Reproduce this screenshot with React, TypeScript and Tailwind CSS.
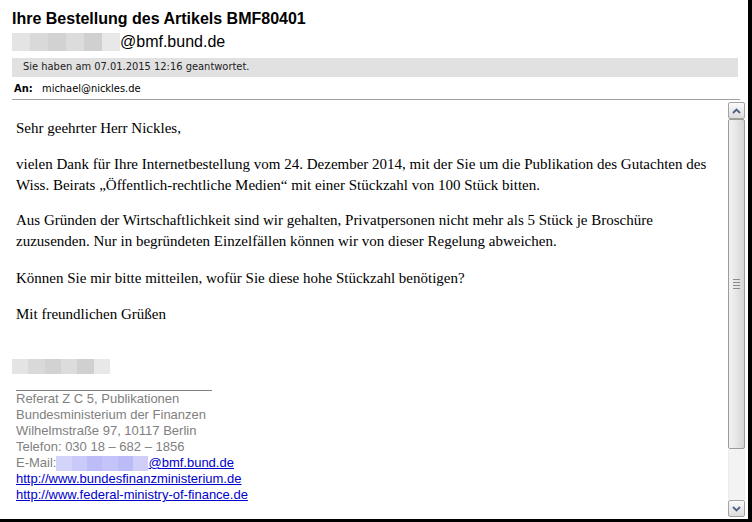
import React from "react";

const serif = { fontFamily: '"Liberation Serif", "Times New Roman", serif' };

function Blur({ w, h, tint }: { w: number; h: number; tint?: boolean }) {
  const cols = tint
    ? ["#d4d4fb", "#c9c9fa", "#bcbcf8", "#c4c4fa", "#bbbbf7", "#cfcffa"]
    : ["#e4e4e4", "#d9d9d9", "#d2d2d2", "#dcdcdc", "#d0d0d0", "#e8e8e8"];
  const seg = w / cols.length;
  return (
    <span className="inline-flex align-middle" style={{ width: w, height: h }}>
      {cols.map((c, i) => (
        <span key={i} style={{ width: seg, height: h, background: c }} />
      ))}
    </span>
  );
}

function ScrollBar() {
  return (
    <div className="flex w-[17px] flex-col pt-[2px] pb-[2px]">
      <div className="flex h-[17px] items-center justify-center rounded-[2px] border border-[#a3a3a3] bg-gradient-to-b from-[#fbfbfb] to-[#dcdcdc]">
        <svg width="9" height="6" viewBox="0 0 9 6">
          <path d="M1 5 L4.5 1.5 L8 5" fill="none" stroke="#4d6185" strokeWidth="1.8" />
        </svg>
      </div>
      <div className="flex h-[330px] items-center justify-center rounded-[2px] border border-[#9a9a9a] bg-gradient-to-r from-[#f2f2f2] via-[#e6e6e6] to-[#d4d4d4]">
        <div className="flex flex-col gap-[2px]">
          <div className="h-px w-[7px] bg-[#8a8a8a]" />
          <div className="h-px w-[7px] bg-[#8a8a8a]" />
          <div className="h-px w-[7px] bg-[#8a8a8a]" />
          <div className="h-px w-[7px] bg-[#8a8a8a]" />
        </div>
      </div>
      <div className="flex-1 bg-[#f3f3f3] border-x border-[#ececec]" />
      <div className="flex h-[17px] items-center justify-center rounded-[2px] border border-[#a3a3a3] bg-gradient-to-b from-[#fbfbfb] to-[#dcdcdc]">
        <svg width="9" height="6" viewBox="0 0 9 6">
          <path d="M1 1 L4.5 4.5 L8 1" fill="none" stroke="#4d6185" strokeWidth="1.8" />
        </svg>
      </div>
    </div>
  );
}

export default function App() {
  return (
    <div
      className="flex h-[522px] w-[752px] flex-col overflow-hidden border-r-4 border-b-[3px] border-black bg-white"
      style={{ fontFamily: '"Liberation Sans", Arial, sans-serif' }}
    >
      <div className="pl-[12px] pt-[9px]">
        <div className="text-[16px] font-bold leading-[20px] text-black">
          Ihre Bestellung des Artikels BMF80401
        </div>
        <div className="mt-[3px] flex items-center text-[16px] leading-[20px] text-black">
          <Blur w={108} h={18} />
          <span>@bmf.bund.de</span>
        </div>
      </div>

      <div className="mx-[12px] mt-[6px] mr-[10px] flex h-[19px] items-center bg-[#e1e1e1] pl-[11px] text-[11px] text-[#222]"
        style={{ fontFamily: 'Tahoma, "DejaVu Sans Condensed", "Liberation Sans", sans-serif' }}
      >
        Sie haben am 07.01.2015 12:16 geantwortet.
      </div>

      <div className="ml-[14px] mt-[3px] flex h-[18px] items-center text-[11px] text-black"
        style={{ fontFamily: 'Tahoma, "DejaVu Sans Condensed", "Liberation Sans", sans-serif' }}
      >
        <span className="w-[28px] font-bold">An:</span>
        <span>michael@nickles.de</span>
      </div>

      <div className="ml-[12px] mr-[8px] mt-[1px] h-px bg-[#a0a0a0]" />

      <div className="flex flex-1 pr-[3px]">
        <div className="flex-1 pl-[16px] pt-[18px] text-[15px] leading-[21px] text-black" style={serif}>
          <p>Sehr geehrter Herr Nickles,</p>
          <p className="mt-[15px]">
            vielen Dank für Ihre Internetbestellung vom 24. Dezember 2014, mit der Sie um die Publikation des Gutachten des
            Wiss. Beirats „Öffentlich-rechtliche Medien“ mit einer Stückzahl von 100 Stück bitten.
          </p>
          <p className="mt-[14px]">
            Aus Gründen der Wirtschaftlichkeit sind wir gehalten, Privatpersonen nicht mehr als 5 Stück je Broschüre
            zuzusenden. Nur in begründeten Einzelfällen können wir von dieser Regelung abweichen.
          </p>
          <p className="mt-[16px]">Können Sie mir bitte mitteilen, wofür Sie diese hohe Stückzahl benötigen?</p>
          <p className="mt-[15px]">Mit freundlichen Grüßen</p>

          <div className="mt-[30px] -ml-[4px]">
            <Blur w={98} h={15} />
          </div>
          <div className="mt-[14px] h-px w-[196px] bg-[#808080]" />
          <div
            className="text-[13px] leading-[16px] text-[#808080]"
            style={{ fontFamily: '"Liberation Sans", Arial, sans-serif' }}
          >
            <div>Referat Z C 5, Publikationen</div>
            <div>Bundesministerium der Finanzen</div>
            <div>Wilhelmstraße 97, 10117 Berlin</div>
            <div>Telefon: 030 18 – 682 – 1856</div>
            <div className="flex items-center">
              <span>E-Mail:</span>
              <Blur w={92} h={15} tint />
              <a className="text-[#0000cc] underline">@bmf.bund.de</a>
            </div>
            <div>
              <a className="text-[#0000cc] underline">http://www.bundesfinanzministerium.de</a>
            </div>
            <div>
              <a className="text-[#0000cc] underline">http://www.federal-ministry-of-finance.de</a>
            </div>
          </div>
        </div>
        <ScrollBar />
      </div>
    </div>
  );
}
